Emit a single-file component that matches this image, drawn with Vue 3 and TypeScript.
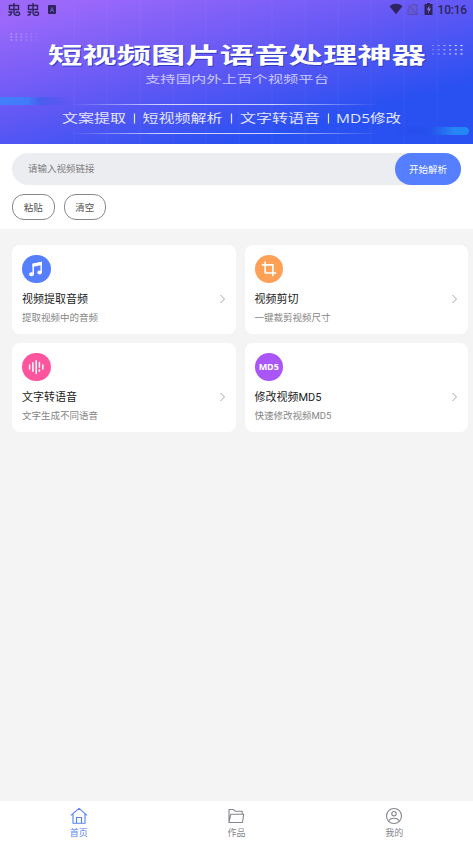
<script setup lang="ts">
interface Tool {
  kind: 'music' | 'crop' | 'voice' | 'md5'
  title: string
  note: string
}

const tools: Tool[] = [
  { kind: 'music', title: '视频提取音频', note: '提取视频中的音频' },
  { kind: 'crop', title: '视频剪切', note: '一键裁剪视频尺寸' },
  { kind: 'voice', title: '文字转语音', note: '文字生成不同语音' },
  { kind: 'md5', title: '修改视频MD5', note: '快速修改视频MD5' },
]
const actions: string[] = ['粘贴', '清空']
const gridLines: number[] = [74, 107, 140, 173, 206, 239, 272, 305, 338, 371, 404, 437]
const dotCols: number[] = [0, 1, 2, 3, 4, 5]
const dotRows: number[] = [0, 1, 2]
</script>

<template>
  <div class="page">
    <header class="banner">
      <svg class="art" width="473" height="144" viewBox="0 0 473 144">
        <defs>
          <linearGradient id="bg" gradientUnits="userSpaceOnUse" x1="170" y1="-22" x2="214" y2="150">
            <stop offset="0" stop-color="#9b68fa" />
            <stop offset=".5" stop-color="#6659f5" />
            <stop offset="1" stop-color="#2950f1" />
          </linearGradient>
          <linearGradient id="rule">
            <stop offset="0" stop-color="#fff" stop-opacity="0" />
            <stop offset=".3" stop-color="#fff" stop-opacity=".75" />
            <stop offset=".65" stop-color="#fff" stop-opacity=".75" />
            <stop offset="1" stop-color="#fff" stop-opacity="0" />
          </linearGradient>
          <linearGradient id="glowL">
            <stop offset="0" stop-color="#4280fa" />
            <stop offset=".4" stop-color="#437bf8" />
            <stop offset=".58" stop-color="#4160ed" stop-opacity=".8" />
            <stop offset="1" stop-color="#4054e8" stop-opacity="0" />
          </linearGradient>
          <linearGradient id="glowR">
            <stop offset="0" stop-color="#2448e8" stop-opacity="0" />
            <stop offset=".48" stop-color="#2551ec" />
            <stop offset=".8" stop-color="#2586f5" />
            <stop offset="1" stop-color="#2387f2" />
          </linearGradient>
        </defs>
        <rect width="473" height="144" fill="url(#bg)" />
        <path v-for="x in gridLines" :key="x" :d="`M${x} 0V144`" stroke="#fff" stroke-opacity=".04" />
        <rect y="97" width="70" height="8" fill="url(#glowL)" />
        <rect x="394" y="127" width="75" height="8" rx="4" fill="url(#glowR)" />
        <rect x="70" y="104" width="310" height="1" fill="url(#rule)" />
        <rect x="70" y="133" width="310" height="1" fill="url(#rule)" />
        <g v-for="r in dotRows" :key="r" fill="#fff">
          <rect v-for="c in dotCols" :key="'l' + c" :x="10.5 + c * 5" :y="33.5 + r * 3" width="1.6" height="1" :opacity=".55 - c * .08" />
          <rect v-for="c in dotCols" :key="'r' + c" :x="432 + c * 5.7" :y="45 + r * 4.2" width="2" height="1.1" :opacity=".3 + c * .12" />
        </g>
        <text class="headline shade" x="49" y="64.3" textLength="378" lengthAdjust="spacingAndGlyphs">短视频图片语音处理神器</text>
        <text class="headline" x="48" y="63" textLength="378" lengthAdjust="spacingAndGlyphs">短视频图片语音处理神器</text>
        <text class="subline" x="145" y="82.8" textLength="184" lengthAdjust="spacingAndGlyphs">支持国内外上百个视频平台</text>
        <g class="topics">
          <text x="62" y="123" textLength="64" lengthAdjust="spacingAndGlyphs">文案提取</text>
          <text x="142.5" y="123" textLength="80" lengthAdjust="spacingAndGlyphs">短视频解析</text>
          <text x="240" y="123" textLength="80" lengthAdjust="spacingAndGlyphs">文字转语音</text>
          <text x="336" y="123" textLength="65" lengthAdjust="spacingAndGlyphs">MD5修改</text>
          <path d="M134.5 113.5v10M231.5 113.5v10M328.5 113.5v10" stroke="#e2e5ff" stroke-width="1.2" />
        </g>
      </svg>
      <div class="status">
        <svg width="60" height="18" viewBox="0 0 60 18" fill="none" stroke="#30245f" stroke-width="1.4">
          <g v-for="x in [8, 27]" :key="x" :transform="`translate(${x} 3)`">
            <path d="M6 0v9.5M1.5 2.5h9v4h-9zM.5 9h4.2M3.2 9v1.5c0 1.3-1.2 1.8-2.7 1.8M6 9.5c0 3.7 5.6 3.6 5.6 1.2 0-2.2-2.5-2.2-4-.7" />
          </g>
          <rect x="48" y="5" width="8" height="9" rx="1" fill="#30245f" stroke="none" />
          <path d="M50.3 12 52 7.5 53.7 12M51 10.5h2" stroke="#7360d8" stroke-width=".8" />
        </svg>
        <div class="status-right">
          <svg width="46" height="18" viewBox="0 0 46 18">
            <path d="M.5 6.3C4.3 3 9.7 3 13.5 6.3L7 14.3z" fill="#30245f" />
            <path d="M28 4.5v10h-9v-6l4-4zM19 4.5l9 10" fill="#6858bc" fill-opacity=".55" stroke="#5443a3" stroke-opacity=".7" stroke-width=".9" />
            <path d="M38 3h3v1h2.5v11h-8V4H38z" fill="#30245f" />
            <path d="m40.5 5.5-2.7 4.2h1.8l-.6 3.8 3-4.9h-1.9z" fill="#8c79e7" />
          </svg>
          <span class="clock">10:16</span>
        </div>
      </div>
    </header>

    <section class="parser">
      <div class="search">
        <span class="hint">请输入视频链接</span>
        <button class="parse">开始解析</button>
      </div>
      <div class="actions">
        <button v-for="a in actions" :key="a" class="chip">{{ a }}</button>
      </div>
    </section>

    <main class="tools">
      <article v-for="t in tools" :key="t.kind" class="card">
        <div class="badge" :class="t.kind">
          <svg v-if="t.kind === 'music'" width="28" height="28" viewBox="0 0 28 28">
            <path d="M11.2 19V9.3l8-1.6v9.7" fill="none" stroke="#fff" stroke-width="1.5" />
            <path d="M10.5 8.7 20 6.8v3.2l-9.5 1.9z" fill="#fff" />
            <ellipse cx="9.5" cy="19.2" rx="2.4" ry="2" fill="#fff" />
            <ellipse cx="17.6" cy="17.5" rx="2.3" ry="2" fill="#fff" />
          </svg>
          <svg v-else-if="t.kind === 'crop'" width="28" height="28" viewBox="0 0 28 28" fill="none" stroke="#fff" stroke-width="1.7">
            <path d="M10.2 6.5V18H21.2M6.8 9.8h11V21.3" />
          </svg>
          <svg v-else-if="t.kind === 'voice'" width="28" height="28" viewBox="0 0 28 28" fill="none" stroke="#fff" stroke-width="1.5" stroke-linecap="round">
            <path d="M7.6 12v4M10.9 9.8v8.4M14.2 7.8v12.8M17.4 9.5v4.7M17.4 16.8v1.5M20.8 12v4" />
          </svg>
          <span v-else>MD5</span>
        </div>
        <div class="title-row">
          <h2>{{ t.title }}</h2>
          <svg width="6" height="10" viewBox="0 0 6 10" fill="none" stroke="#999" stroke-width=".9"><path d="m.5 1 4 4-4 4" /></svg>
        </div>
        <p>{{ t.note }}</p>
      </article>
    </main>

    <nav class="tabs">
      <a class="tab active">
        <svg width="18" height="18" viewBox="0 0 18 18" fill="none" stroke="currentColor" stroke-width="1.1" stroke-linejoin="round">
          <path d="M1 8.4 9 1.3l8 7.1M3 7v9.2h12V7M6.5 16v-5.5h5V16" />
        </svg>
        <span>首页</span>
      </a>
      <a class="tab">
        <svg width="18" height="18" viewBox="0 0 18 18" fill="none" stroke="currentColor" stroke-width="1.1" stroke-linejoin="round">
          <path d="M2 15.5V2.5h4.5L8 4.2h7.2v3M2 15.5h13.5l1.2-8.3H3.8z" />
        </svg>
        <span>作品</span>
      </a>
      <a class="tab">
        <svg width="18" height="18" viewBox="0 0 18 18" fill="none" stroke="currentColor" stroke-width="1.1">
          <circle cx="9" cy="9" r="7.5" /><circle cx="9" cy="6.7" r="2.2" />
          <path d="M3.8 14.2c1.2-4 9.2-4 10.4 0" />
        </svg>
        <span>我的</span>
      </a>
    </nav>
  </div>
</template>

<style>
body { margin: 0; }
</style>

<style scoped>
.page {
  display: flex;
  flex-direction: column;
  width: 473px;
  height: 842px;
  overflow: hidden;
  background: #f4f4f4;
  font-family: Roboto, "Noto Sans CJK SC", sans-serif;
}
.banner { display: grid; flex: none; height: 144px; }
.banner > * { grid-area: 1 / 1; }
.art { display: block; }
.art text { font-family: "Open Sans", "Noto Sans CJK SC", sans-serif; }
.headline { font-size: 22px; font-weight: 700; fill: #fff; }
.headline.shade { fill: #303cc0; }
.subline { font-size: 10.5px; fill: #cbc7ff; }
.topics text { font-size: 12px; fill: #e2e5ff; }
.status {
  display: flex;
  justify-content: space-between;
  align-items: flex-start;
  height: 18px;
  padding: 0 6px 0 0;
}
.status-right { display: flex; align-items: flex-start; gap: 3px; }
.clock { font-size: 12px; line-height: 16px; font-weight: 500; color: #30245f; letter-spacing: -.2px; padding-top: 2px; }
.parser {
  flex: none;
  box-sizing: border-box;
  height: 85px;
  padding: 9px 12px 0;
  background: #fff;
}
.search {
  display: flex;
  align-items: center;
  justify-content: space-between;
  height: 32px;
  padding-left: 16px;
  border-radius: 16px;
  background: #ecedf1;
}
.hint { font-size: 9.5px; color: #808080; padding-bottom: 2px; }
button { font-family: inherit; padding: 0; }
.parse {
  width: 66px;
  height: 32px;
  border: 0;
  border-radius: 16px;
  background: #557fff;
  color: #fff;
  font-size: 9.5px;
}
.actions { display: flex; gap: 9px; padding-top: 9px; }
.chip {
  box-sizing: border-box;
  width: 42.5px;
  height: 26px;
  border: 1px solid #888;
  border-radius: 12px;
  background: #fff;
  color: #555;
  font-size: 9.5px;
}
.tools {
  display: grid;
  grid-template-columns: 223.5px 223.5px;
  grid-auto-rows: 88.5px;
  gap: 9.5px 9px;
  padding: 16px 0 0 12px;
}
.card {
  box-sizing: border-box;
  padding: 9.5px 10px 0;
  border-radius: 8px;
  background: #fff;
}
.badge {
  display: flex;
  align-items: center;
  justify-content: center;
  width: 28.5px;
  height: 28.5px;
  border-radius: 50%;
}
.music { background: #557fff; }
.crop { background: #ffa057; }
.voice { background: #ff559f; }
.md5 { background: #a955f7; color: #fff; font: 700 9px "Noto Sans", sans-serif; }
.title-row { display: flex; justify-content: space-between; align-items: center; height: 16px; margin-top: 8px; }
.title-row h2 { margin: 0; padding-top: 2px; font-size: 11px; line-height: 16px; font-weight: 400; color: #222; }
.card p { margin: 4px 0 0; font-size: 9.5px; line-height: 14px; color: #858585; }
.tabs {
  display: grid;
  grid-template-columns: repeat(3, 1fr);
  height: 41px;
  margin-top: auto;
  background: #fff;
}
.tab {
  display: flex;
  flex-direction: column;
  align-items: center;
  padding-top: 6px;
  color: #85858c;
  font-size: 9px;
  line-height: 14px;
}
.tab span { margin-top: 1px; }
.tab.active { color: #5680f7; }
</style>
